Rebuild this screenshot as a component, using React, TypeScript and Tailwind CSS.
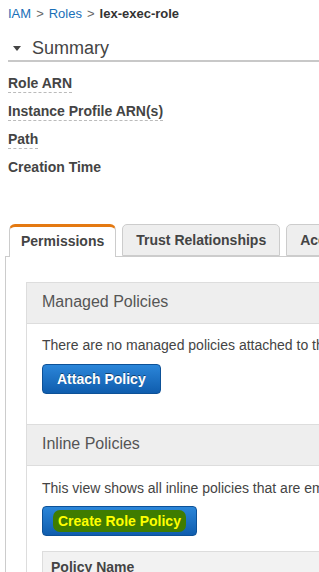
import React from 'react';

const font = "font-['Liberation_Sans',Arial,Helvetica,sans-serif]";

const Label: React.FC<{ text: string; dashed?: boolean }> = ({ text, dashed = true }) => (
  <div className="h-[28px]">
    <span
      className={`inline-block text-[14px] font-bold leading-[18px] text-[#444] ${
        dashed ? 'border-b border-dashed border-[#bbb]' : ''
      }`}
    >
      {text}
    </span>
  </div>
);

const BlueButton: React.FC<{ children: React.ReactNode; className?: string }> = ({ children, className = '' }) => (
  <button
    type="button"
    className={`inline-flex h-[30px] items-center whitespace-nowrap rounded-[4px] border border-[#0d5197] bg-gradient-to-b from-[#2b86d9] to-[#0f5dae] text-[14px] font-bold text-white [text-shadow:0_-1px_0_rgba(0,0,0,0.45)] ${className}`}
  >
    {children}
  </button>
);

export default function App() {
  return (
    <div className={`h-[572px] w-[319px] overflow-hidden bg-white ${font}`}>
      <div className="w-[700px]">
        {/* breadcrumb */}
        <div className="flex items-center gap-[5px] pl-2 pt-[6px] text-[13px] leading-[16px]">
          <span className="text-[#1a6fb8]">IAM</span>
          <span className="text-[#666]">&gt;</span>
          <span className="text-[#1a6fb8]">Roles</span>
          <span className="text-[#666]">&gt;</span>
          <span className="font-bold text-[#333]">lex-exec-role</span>
        </div>

        {/* summary heading */}
        <div className="ml-2 mt-[15px] flex h-[25px] items-center border-b-2 border-[#c8c8c8] pb-[1px]">
          <svg width="8" height="5" viewBox="0 0 8 5" className="ml-[5px] mr-[11px]">
            <path d="M0 0 L8 0 L4 5 Z" fill="#444" />
          </svg>
          <span className="text-[18px] leading-[22px] text-[#444]">Summary</span>
        </div>

        {/* summary rows */}
        <div className="ml-2 mt-[9px]">
          <Label text="Role ARN" />
          <Label text="Instance Profile ARN(s)" />
          <Label text="Path" />
          <Label text="Creation Time" dashed={false} />
        </div>

        {/* tabs */}
        <div className="ml-[5px] mt-[41px]">
          <div className="relative z-10 -mb-px flex items-end gap-[6px] pl-[4px]">
            <div className="flex h-[33px] items-center rounded-t-[6px] border-x border-t-[3px] border-x-[#ccc] border-t-[#e47911] bg-white px-[11px] pb-[2px] text-[14px] font-bold text-[#444]">
              Permissions
            </div>
            <div className="mb-px flex h-[32px] items-center rounded-t-[5px] border border-[#ccc] bg-[#eee] px-[13px] text-[14px] font-bold text-[#444]">
              Trust Relationships
            </div>
            <div className="mb-px flex h-[32px] items-center rounded-t-[5px] border border-[#ccc] bg-[#eee] px-[13px] text-[14px] font-bold text-[#444]">
              Access Advisor
            </div>
          </div>

          {/* panel */}
          <div className="border-l border-t border-[#ccc] pl-[20px] pt-[25px]">
            <div className="border border-[#ddd]">
              <div className="flex h-[41px] items-center border-b border-[#ddd] bg-[#eee] px-[15px] pb-[2px] text-[16px] text-[#555]">
                Managed Policies
              </div>
              <div className="px-[15px] pb-[30px] pt-[13px]">
                <p className="whitespace-nowrap text-[14px] leading-[16px] text-[#444]">
                  There are no managed policies attached to this role.
                </p>
                <BlueButton className="mt-[11px] px-[14px]">Attach Policy</BlueButton>
              </div>

              <div className="flex h-[42px] items-center border-y border-[#ddd] bg-[#eee] px-[15px] pb-[3px] text-[16px] text-[#555]">
                Inline Policies
              </div>
              <div className="px-[15px] pt-[14px]">
                <p className="whitespace-nowrap text-[14px] leading-[16px] text-[#444]">
                  This view shows all inline policies that are embedded in this role.
                </p>
                <BlueButton className="mt-[10px] w-[155px] px-[10px]">
                  <span className="rounded-[7px] bg-[#3f7c00] px-[5px] py-[2px] leading-[18px] text-[#ffff00] [text-shadow:none]">
                    Create Role Policy
                  </span>
                </BlueButton>
                <div className="mt-[15px] border border-[#ddd] bg-[#f2f2f2] px-[8px] py-[7px] text-[14px] font-bold leading-[17px] text-[#444]">
                  Policy Name
                </div>
              </div>
            </div>
          </div>
        </div>
      </div>
    </div>
  );
}
